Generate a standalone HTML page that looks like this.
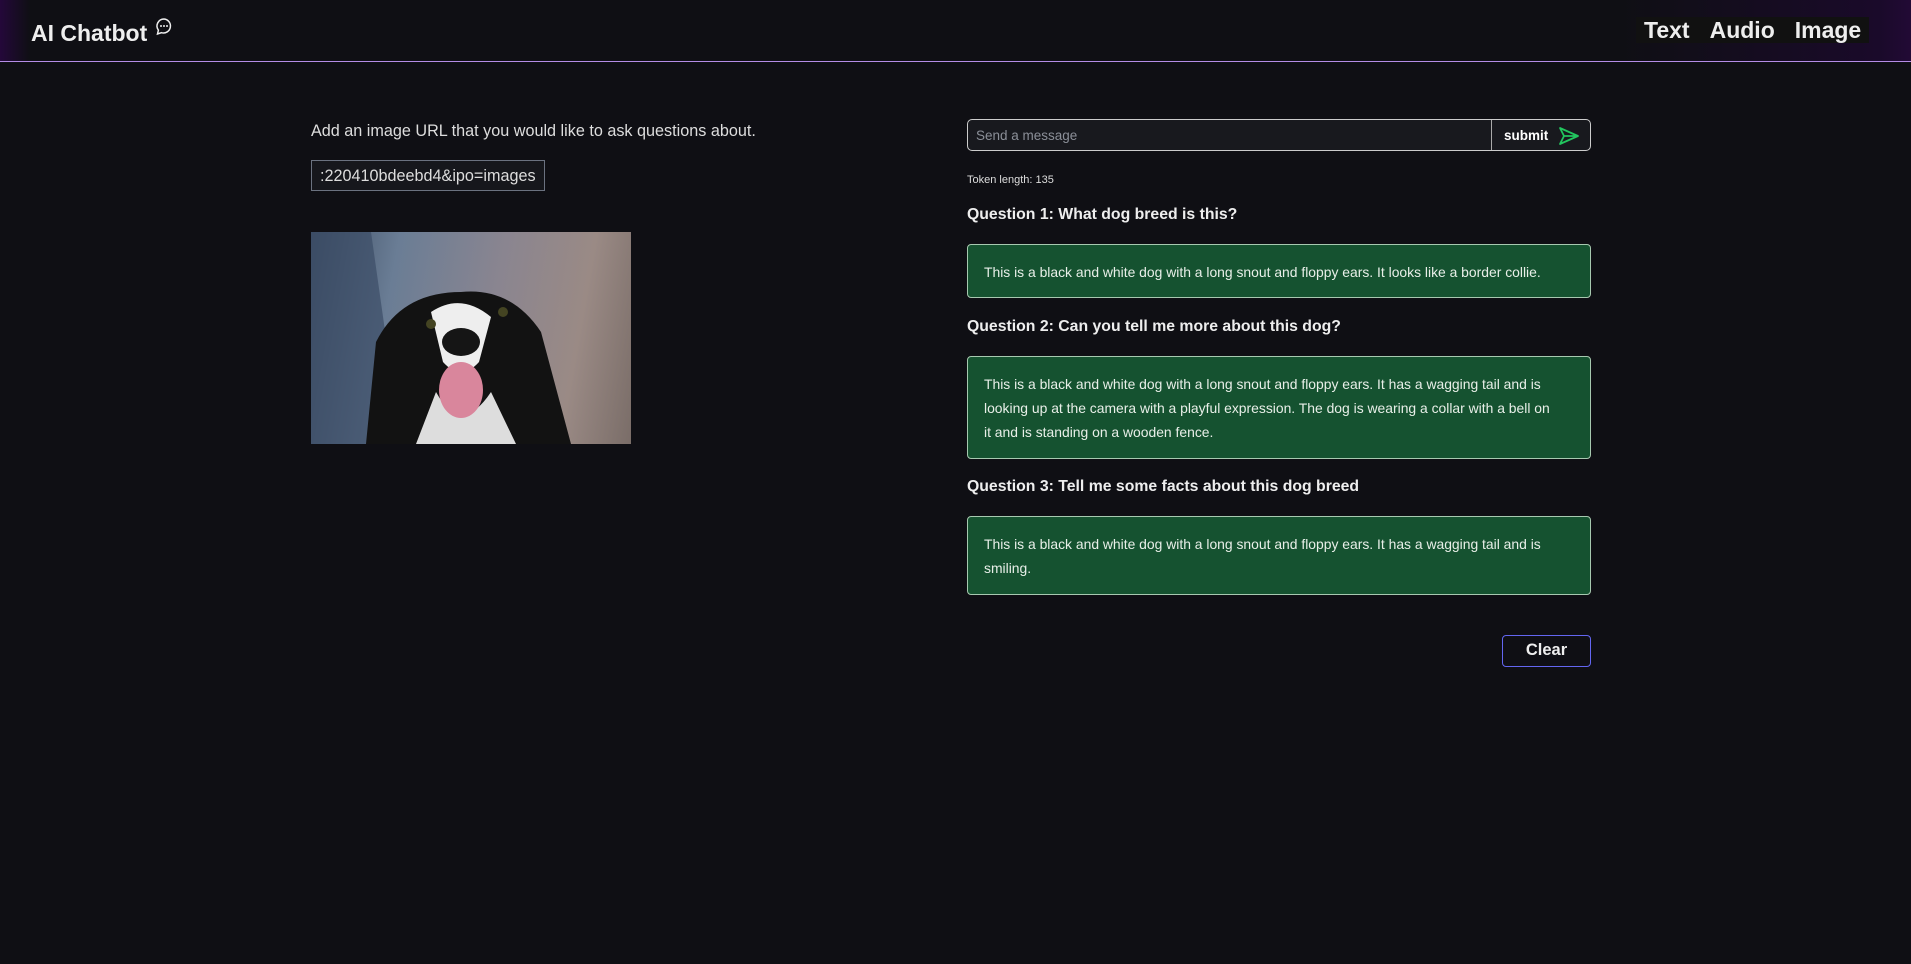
<!DOCTYPE html>
<html><head><meta charset="utf-8"><style>
*{box-sizing:border-box;margin:0;padding:0}
body{width:1911px;height:964px;background:#0f0f14;color:#e5e7eb;font-family:"Liberation Sans",sans-serif;position:relative;overflow:hidden}
.hdr{position:absolute;left:0;top:0;width:1911px;height:62px;border-bottom:1px solid #b48ce6;background:linear-gradient(90deg,#24083a 0,#0f0f14 30px,#0f0f14 1620px,#1a0a2a 1880px,#220a35 100%)}
.logo{position:absolute;left:31px;top:17px;font-size:23px;font-weight:bold;color:#eee}
.nav{position:absolute;left:1636px;top:17px;height:26px;padding:0 8px;background:#111;font-size:23px;font-weight:bold;color:#eee;display:flex;gap:20px;line-height:26px}
.a{position:absolute}
.lbl{left:311px;top:122px;font-size:16.2px;color:#ddd}
.url{left:311px;top:160px;width:234px;height:31px;border:1px solid #6b7280;background:#16171c;font-size:16.2px;padding:6px 8px;color:#ddd;white-space:nowrap;overflow:hidden}
.img{left:311px;top:232px;width:320px;height:212px;overflow:hidden;background:linear-gradient(100deg,#3a4a60 0,#6a7d95 25%,#8a8590 55%,#9a8a85 80%,#7a6d68 100%)}
.msg{left:967px;top:119px;width:624px;height:32px;border:1px solid #ccc;border-radius:5px;background:#18191e}
.msg .ph{position:absolute;left:8px;top:8px;font-size:13.5px;color:#8b8f98}
.msg .div{position:absolute;left:523px;top:0;width:1px;height:30px;background:#aaa}
.msg .sb{position:absolute;left:536px;top:8px;font-size:13.5px;font-weight:bold;color:#fff}
.tok{left:967px;top:174px;font-size:11px;color:#ddd}
.q{left:967px;font-size:15.8px;font-weight:bold;color:#eee}
.box{left:967px;width:624px;background:#155230;border:1px solid #a7c9b0;border-radius:4px;padding:15px 16px;font-size:13.9px;line-height:24px;color:#e8efe8}
.clr{left:1502px;top:635px;width:89px;height:32px;border:1.5px solid #6366f1;border-radius:4px;font-size:16.5px;font-weight:bold;color:#eee;text-align:center;line-height:29px}
</style></head><body>
<div class="hdr">
<div class="logo">AI Chatbot <svg width="20" height="20" viewBox="0 0 20 20" style="vertical-align:4px"><path d="M10 2a7 7 0 0 0-5.6 11.2L3.5 17l4-1.3A7 7 0 1 0 10 2z" fill="none" stroke="#eee" stroke-width="1.5"/><circle cx="7" cy="9" r="1" fill="#eee"/><circle cx="10" cy="9" r="1" fill="#eee"/><circle cx="13" cy="9" r="1" fill="#eee"/></svg></div>
<div class="nav"><span>Text</span><span>Audio</span><span>Image</span></div>
</div>
<div class="a lbl">Add an image URL that you would like to ask questions about.</div>
<div class="a url">:220410bdeebd4&amp;ipo=images</div>
<div class="a img"><svg width="320" height="212" viewBox="0 0 320 212">
<path d="M0 0 L60 0 L90 212 L0 212Z" fill="#3c4d66" opacity=".7"/>
<path d="M55 212 L65 110 Q90 60 150 60 Q200 55 230 100 L260 212Z" fill="#121212"/>
<path d="M105 212 L125 160 Q150 205 180 160 L205 212Z" fill="#ddd"/>
<path d="M120 80 Q150 60 180 85 L168 130 Q150 150 132 130Z" fill="#eee"/>
<ellipse cx="150" cy="110" rx="19" ry="14" fill="#151515"/>
<ellipse cx="150" cy="158" rx="22" ry="28" fill="#d9869c"/>
<circle cx="120" cy="92" r="5" fill="#442"/><circle cx="192" cy="80" r="5" fill="#442"/>
</svg></div>
<div class="a msg"><span class="ph">Send a message</span><div class="div"></div><span class="sb">submit</span>
<svg style="position:absolute;left:590px;top:6px" width="22" height="20" viewBox="0 0 22 20"><path d="M2 2 L20 10 L2 18 L6 10 Z M6 10 H20" fill="none" stroke="#22c55e" stroke-width="1.8" stroke-linejoin="round"/></svg></div>
<div class="a tok">Token length: 135</div>
<div class="a q" style="top:206px">Question 1: What dog breed is this?</div>
<div class="a box" style="top:244px;height:54px">This is a black and white dog with a long snout and floppy ears. It looks like a border collie.</div>
<div class="a q" style="top:318px">Question 2: Can you tell me more about this dog?</div>
<div class="a box" style="top:356px;height:103px;padding-right:36px">This is a black and white dog with a long snout and floppy ears. It has a wagging tail and is looking up at the camera with a playful expression. The dog is wearing a collar with a bell on it and is standing on a wooden fence.</div>
<div class="a q" style="top:478px">Question 3: Tell me some facts about this dog breed</div>
<div class="a box" style="top:516px;height:79px">This is a black and white dog with a long snout and floppy ears. It has a wagging tail and is smiling.</div>
<div class="a clr">Clear</div>
</body></html>
